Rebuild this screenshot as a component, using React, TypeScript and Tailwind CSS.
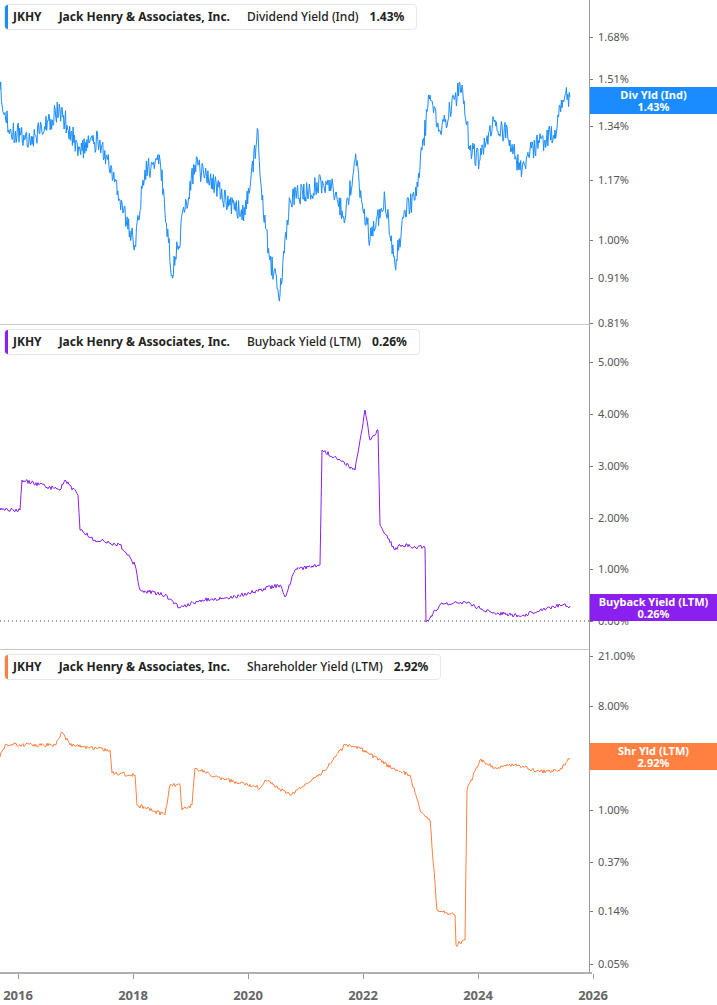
import React from "react";

type Pt = [number, number];

function rng(seed: number) {
  let s = seed;
  return () => {
    s = (s * 16807) % 2147483647;
    return s / 2147483647;
  };
}

function makePath(pts: Pt[], top: number, noise: number, seed: number, step = 1.2) {
  const r = rng(seed);
  let d = "";
  for (let i = 0; i < pts.length - 1; i++) {
    const [x0, y0] = pts[i];
    const [x1, y1] = pts[i + 1];
    const n = Math.max(1, Math.round((x1 - x0) / step));
    for (let k = 0; k < n; k++) {
      const t = k / n;
      const x = x0 + (x1 - x0) * t;
      const y = y0 + (y1 - y0) * t + (k === 0 ? 0 : (r() - 0.5) * noise) - top;
      d += (d ? "L" : "M") + x.toFixed(1) + " " + y.toFixed(1);
    }
  }
  const [lx, ly] = pts[pts.length - 1];
  d += "L" + lx + " " + (ly - top);
  return d;
}

const blue: Pt[] = [[0,90],[10,130],[30,140],[60,110],[80,150],[100,140],[120,200],[135,245],[145,170],[160,160],[172,275],[185,210],[195,165],[210,180],[230,205],[245,215],[258,130],[262,200],[270,260],[280,295],[290,200],[310,190],[330,180],[345,220],[355,160],[370,240],[385,200],[395,265],[405,210],[415,200],[422,150],[430,95],[440,130],[450,110],[462,85],[470,150],[480,160],[495,120],[510,140],[520,170],[530,150],[545,140],[555,130],[565,95],[570,97]];
const purple: Pt[] = [[0,510],[20,510],[22,480],[60,490],[65,480],[78,495],[80,530],[95,540],[120,545],[135,565],[140,590],[165,595],[180,608],[200,600],[230,598],[260,590],[280,585],[285,597],[295,570],[320,565],[322,450],[340,460],[355,470],[365,410],[370,440],[378,430],[380,525],[395,550],[400,545],[425,548],[426,622],[440,605],[465,602],[490,612],[520,616],[540,610],[560,605],[570,606]];
const orange: Pt[] = [[0,757],[5,745],[55,745],[62,732],[70,745],[110,750],[112,773],[135,775],[137,805],[165,815],[170,785],[180,785],[182,810],[192,805],[195,768],[220,778],[260,788],[265,780],[290,795],[320,775],[345,745],[360,748],[395,770],[410,775],[420,810],[430,820],[437,910],[455,915],[456,945],[465,940],[467,790],[480,760],[495,768],[515,765],[540,772],[560,770],[570,758]];

type Panel = {
  top: number; h: number; color: string; metric: string; value: string;
  pts: Pt[]; noise: number; step: number; ticks: [string, number][]; badge: [string, number];
  dotted?: number; border: boolean;
};

const panels: Panel[] = [
  { top: 0, h: 325, color: "#1a8cff", metric: "Dividend Yield (Ind)", value: "1.43%", pts: blue, noise: 22, step: 0.7,
    ticks: [["1.68%",37],["1.51%",79],["1.34%",126],["1.17%",180],["1.00%",240],["0.91%",278],["0.81%",323]],
    badge: ["Div Yld (Ind)", 87], border: true },
  { top: 325, h: 325, color: "#8a1ff0", metric: "Buyback Yield (LTM)", value: "0.26%", pts: purple, noise: 4, step: 1,
    ticks: [["5.00%",362],["4.00%",414],["3.00%",466],["2.00%",518],["1.00%",569],["0.00%",621]],
    badge: ["Buyback Yield (LTM)", 594], dotted: 621, border: true },
  { top: 650, h: 322, color: "#ff8040", metric: "Shareholder Yield (LTM)", value: "2.92%", pts: orange, noise: 4, step: 1,
    ticks: [["21.00%",656],["8.00%",706],["3.00%",757],["1.00%",810],["0.37%",862],["0.14%",911],["0.05%",964]],
    badge: ["Shr Yld (LTM)", 743], border: false },
];

function ChartPanel({ p, seed }: { p: Panel; seed: number }) {
  return (
    <div className="flex" style={{ height: p.h }}>
      <div className={`relative w-[590px] border-r border-[#9a9a9a] ${p.border ? "border-b border-b-[#c8c8c8]" : ""}`}>
        <svg className="absolute inset-0" width={590} height={p.h}>
          {p.dotted !== undefined && (
            <line x1={0} x2={590} y1={p.dotted - p.top} y2={p.dotted - p.top} stroke="#444" strokeWidth={1} strokeDasharray="1 3" />
          )}
          <path d={makePath(p.pts, p.top, p.noise, seed, p.step)} fill="none" stroke={p.color} strokeWidth={1} strokeLinejoin="round" />
        </svg>
        <div className="absolute left-1 top-1 flex h-[26px] items-center gap-[17px] rounded border border-[#e8e8e8] bg-white pl-2 pr-3 text-[12px] text-[#222] font-['Inter']">
          <span className="absolute left-0 top-0 bottom-0 w-[3px] rounded-l" style={{ background: p.color }} />
          <span className="font-bold">JKHY</span>
          <span className="font-bold">Jack Henry &amp; Associates, Inc.</span>
          <span className="-mr-[6px] font-medium">{p.metric}</span>
          <span className="font-bold">{p.value}</span>
        </div>
      </div>
      <div className="relative flex-1 font-['Inter'] text-[11px] text-[#555]">
        {p.ticks.map(([t, y]) => (
          <div key={t} className="absolute left-0 flex items-center" style={{ top: y - p.top - 8 }}>
            <span className="h-px w-[3px] bg-[#777]" />
            <span className="ml-[5px] leading-4">{t}</span>
          </div>
        ))}
        <div className="absolute left-0 right-0 flex h-[27px] flex-col items-center justify-center text-[11px] font-bold leading-[12px] text-white"
          style={{ top: p.badge[1] - p.top, background: p.color }}>
          <span>{p.badge[0]}</span>
          <span>{p.value}</span>
        </div>
      </div>
    </div>
  );
}

export default function App() {
  const years = ["2016", "2018", "2020", "2022", "2024", "2026"];
  return (
    <div className="h-[1005px] w-[717px] overflow-hidden bg-white">
      {panels.map((p, i) => <ChartPanel key={i} p={p} seed={i * 97 + 13} />)}
      <div className="relative h-[33px] w-[592px] border-t-2 border-[#b0b0b0] font-['Liberation_Sans',sans-serif] text-[13px] font-bold text-[#666]">
        {years.map((y, i) => (
          <div key={y} className="absolute top-0 flex flex-col items-center" style={{ left: 18 + i * 115 - 20, width: 40 }}>
            <span className="h-[5px] w-px bg-[#999]" />
            <span className="mt-[7px]">{y}</span>
          </div>
        ))}
      </div>
    </div>
  );
}
